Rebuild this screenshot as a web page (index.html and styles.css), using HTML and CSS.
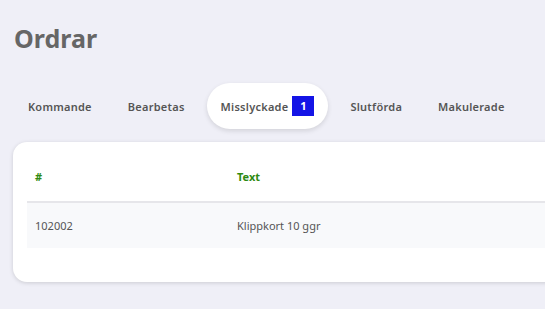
FILE: index.html
```html
<!DOCTYPE HTML>
<html>
<head>
	<meta charset="utf-8">
	<title>Ordrar</title>
	<link rel="stylesheet" href="styles.css">
</head>
<body>
	<h1 class="page-title">Ordrar</h1>

	<div class="tabs">
		<a class="tab">Kommande</a>
		<a class="tab">Bearbetas</a>
		<a class="tab tab-active">Misslyckade <span class="badge">1</span></a>
		<a class="tab">Slutförda</a>
		<a class="tab">Makulerade</a>
	</div>

	<div class="card">
		<table class="orders">
			<thead>
				<tr><th class="col-id">#</th><th>Text</th></tr>
			</thead>
			<tbody>
				<tr><td class="col-id">102002</td><td>Klippkort 10 ggr</td></tr>
			</tbody>
		</table>
	</div>
</body>
</html>
```

FILE: styles.css
```css
html, body {
	margin: 0;
	height: 100%;
}

body {
	background: #efeff7;
	font-family: "Noto Sans", "Open Sans", sans-serif;
	color: #555;
	overflow: hidden;
}

.page-title {
	margin: 0;
	padding: 20px 0 0 14px;
	font-size: 25px;
	line-height: 36px;
	font-weight: 700;
	color: #666;
}

.tabs {
	display: flex;
	align-items: center;
	gap: 8px;
	margin: 27px 0 0 14px;
}

.tab {
	display: flex;
	align-items: center;
	height: 46px;
	padding: 0 14px;
	font-size: 11px;
	font-weight: 600;
	letter-spacing: 0.25px;
	color: #555;
	border-radius: 23px;
}

.tab-active {
	background: #fff;
	box-shadow: 0 2px 5px rgba(0, 0, 0, 0.12);
	padding-right: 14px;
}

.badge {
	display: inline-block;
	width: 22px;
	height: 20px;
	margin-left: 4px;
	background: #1414e6;
	color: #fff;
	font-size: 11px;
	font-weight: 700;
	letter-spacing: 0;
	line-height: 20px;
	text-align: center;
}

.card {
	width: 600px;
	margin: 13px 0 0 13px;
	padding: 10px 14px 34px;
	background: #fff;
	border-radius: 14px;
	box-shadow: 0 1px 4px rgba(0, 0, 0, 0.15);
}

.orders {
	width: 100%;
	border-collapse: collapse;
	font-size: 11px;
}

.orders th {
	height: 49px;
	padding: 0 8px;
	text-align: left;
	color: #2e8a12;
	font-weight: 700;
	border-bottom: 2px solid #e6e6ea;
}

.orders td {
	height: 45px;
	padding: 0 8px;
	background: #f8f9fb;
	color: #555;
}

.col-id {
	width: 186px;
}
```
